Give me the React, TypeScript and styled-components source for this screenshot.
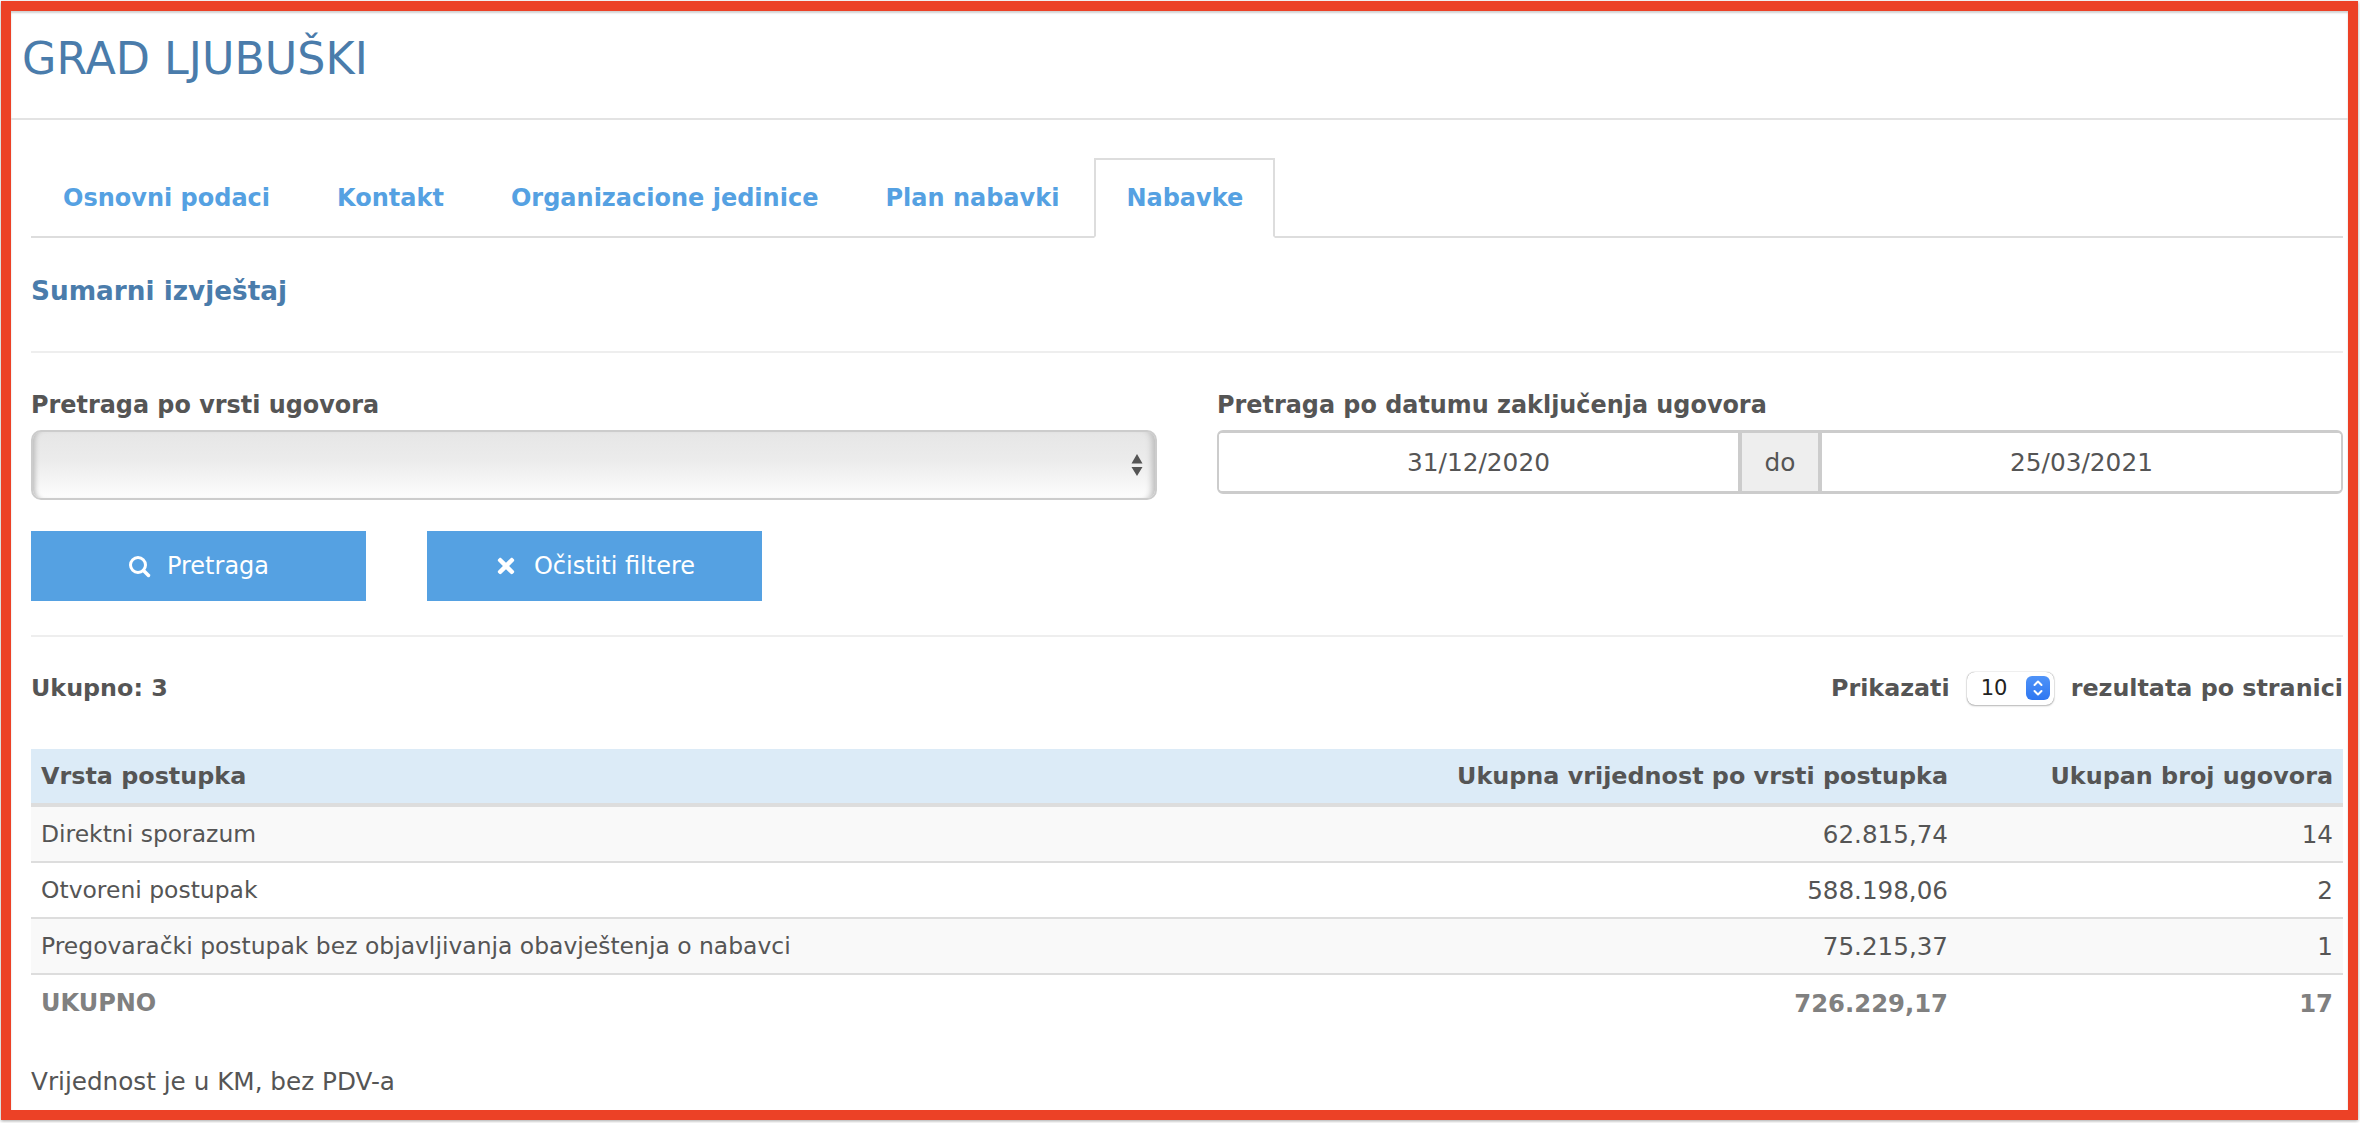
import React from "react";
import styled, { createGlobalStyle } from "styled-components";
import { FaTimes } from "react-icons/fa";

const Global = createGlobalStyle`
  html, body { margin: 0; padding: 0; background: #fff; }
  body { font-family: "DejaVu Sans", Verdana, sans-serif; color: #555; }
  * { box-sizing: border-box; }
`;

const Frame = styled.div`
  width: 2357px;
  height: 1119px;
  margin: 1px 2px 3px 1px;
  border: 10px solid #ec4126;
  box-shadow: 0 1px 3px rgba(0, 0, 0, 0.35), inset 0 2px 2px rgba(0, 0, 0, 0.18);
  background: #fff;
  overflow: hidden;
`;
const Header = styled.header`
  height: 109px;
  border-bottom: 2px solid #e3e3e3;
  padding: 20px 0 0 11px;
`;
const Title = styled.h1`
  margin: 0;
  font-size: 44.4px;
  line-height: 56px;
  font-weight: 400;
  color: #4a7cab;
`;
const Content = styled.main`
  padding: 38px 5px 0 20px;
`;
const Tabs = styled.nav`
  display: flex;
  height: 80px;
  border-bottom: 2px solid #ddd;
`;
const Tab = styled.a<{ $active?: boolean }>`
  height: 80px;
  padding: 0 30px;
  margin-right: 3px;
  display: flex;
  align-items: center;
  font-size: 24px;
  font-weight: 700;
  color: #55a1e2;
  background: ${(p) => (p.$active ? "#fff" : "transparent")};
  border: 2px solid ${(p) => (p.$active ? "#ddd" : "transparent")};
  border-bottom-color: ${(p) => (p.$active ? "#fff" : "transparent")};
`;
const Subtitle = styled.h2`
  margin: 37px 0 0;
  font-size: 26.3px;
  line-height: 32px;
  font-weight: 700;
  color: #4a7cab;
`;
const Rule = styled.hr<{ $top: number }>`
  margin: ${(p) => p.$top}px 0 0;
  border: 0;
  height: 2px;
  background: #eee;
`;
const Filters = styled.section`
  display: grid;
  grid-template-columns: 1126px 1126px;
  justify-content: space-between;
  margin-top: 37px;
`;
const Field = styled.div`
  display: flex;
  flex-direction: column;
`;
const Label = styled.label`
  font-size: 23.9px;
  line-height: 30px;
  height: 40px;
  font-weight: 700;
  color: #555;
`;
const FakeSelect = styled.div`
  height: 70px;
  border: 2px solid #ccc;
  border-radius: 10px;
  background: linear-gradient(#e6e6e6 0%, #ececec 45%, #fdfdfd 100%);
  box-shadow: inset 6px 0 5px -4px #bbb, inset -8px 0 6px -5px #bbb;
  display: flex;
  align-items: center;
  justify-content: flex-end;
  padding-right: 12px;
`;
const DateGroup = styled.div`
  display: grid;
  grid-template-columns: 1fr 84px 1fr;
  height: 64px;
  border: 2px solid #ccc;
  border-top-width: 3px;
  border-bottom-width: 3px;
  border-radius: 6px;
  overflow: hidden;
`;
const DateInput = styled.div`
  display: flex;
  align-items: center;
  justify-content: center;
  font-size: 24.8px;
  color: #555;
  background: #fff;
`;
const DateAddon = styled(DateInput)`
  background: #eee;
  border-left: 4px solid #ccc;
  border-right: 4px solid #ccc;
`;
const Actions = styled.div`
  display: flex;
  gap: 61px;
  margin-top: 31px;
`;
const Button = styled.button`
  width: 335px;
  height: 70px;
  border: 0;
  background: #55a1e2;
  color: #fff;
  font-family: inherit;
  font-size: 24px;
  display: flex;
  align-items: center;
  justify-content: center;
  gap: 16px;
`;
const Summary = styled.div`
  height: 112px;
  padding-bottom: 10px;
  display: flex;
  align-items: center;
  justify-content: space-between;
  font-size: 23.8px;
  font-weight: 700;
  color: #555;
`;
const PageSize = styled.div`
  display: flex;
  align-items: center;
  gap: 17px;
`;
const MiniSelect = styled.div`
  width: 87px;
  height: 33px;
  border-radius: 8px;
  background: #fff;
  box-shadow: 0 0 1px rgba(0, 0, 0, 0.5), 0 1px 2px rgba(0, 0, 0, 0.25);
  display: flex;
  align-items: center;
  justify-content: space-between;
  padding: 0 4px 0 14px;
  font-size: 21px;
  font-weight: 400;
  color: #222;
`;
const MiniArrows = styled.span`
  width: 24px;
  height: 24px;
  border-radius: 6px;
  background: linear-gradient(#4f93f8, #2f77f1);
  display: flex;
  align-items: center;
  justify-content: center;
`;
const Table = styled.table`
  width: 100%;
  border-collapse: separate;
  border-spacing: 0;
  font-size: 23.45px;
  color: #555;
`;
const HeadCell = styled.th<{ $right?: boolean; $w?: number }>`
  height: 58px;
  padding: 0 10px;
  background: #dcebf7;
  border-bottom: 4px solid #ddd;
  font-size: 23.85px;
  font-weight: 700;
  text-align: ${(p) => (p.$right ? "right" : "left")};
  width: ${(p) => (p.$w ? `${p.$w}px` : "auto")};
`;
const Cell = styled.td<{ $right?: boolean }>`
  height: 56px;
  padding: 0 10px;
  border-bottom: 2px solid #ddd;
  font-size: ${(p) => (p.$right ? "24.6px" : "inherit")};
  text-align: ${(p) => (p.$right ? "right" : "left")};
`;
const Row = styled.tr<{ $odd?: boolean }>`
  background: ${(p) => (p.$odd ? "#f9f9f9" : "#fff")};
`;
const TotalCell = styled.td<{ $right?: boolean }>`
  height: 56px;
  padding: 0 10px;
  font-size: ${(p) => (p.$right ? "24.3px" : "24px")};
  font-weight: 700;
  color: #808080;
  text-align: ${(p) => (p.$right ? "right" : "left")};
`;
const Note = styled.p`
  margin: 36px 0 0;
  font-size: 24.7px;
  line-height: 30px;
  color: #555;
`;

const rows = [
  ["Direktni sporazum", "62.815,74", "14"],
  ["Otvoreni postupak", "588.198,06", "2"],
  ["Pregovarački postupak bez objavljivanja obavještenja o nabavci", "75.215,37", "1"],
];

export default function App() {
  return (
    <>
      <Global />
      <Frame>
        <Header>
          <Title>GRAD LJUBUŠKI</Title>
        </Header>
        <Content>
          <Tabs>
            <Tab>Osnovni podaci</Tab>
            <Tab>Kontakt</Tab>
            <Tab>Organizacione jedinice</Tab>
            <Tab>Plan nabavki</Tab>
            <Tab $active>Nabavke</Tab>
          </Tabs>
          <Subtitle>Sumarni izvještaj</Subtitle>
          <Rule $top={44} />
          <Filters>
            <Field>
              <Label>Pretraga po vrsti ugovora</Label>
              <FakeSelect>
                <svg width="12" height="22" viewBox="0 0 12 22" fill="#555">
                  <path d="M6 0l5.500 9.500H.5zM6 22L.5 13h11z" />
                </svg>
              </FakeSelect>
            </Field>
            <Field>
              <Label>Pretraga po datumu zaključenja ugovora</Label>
              <DateGroup>
                <DateInput>31/12/2020</DateInput>
                <DateAddon>do</DateAddon>
                <DateInput>25/03/2021</DateInput>
              </DateGroup>
            </Field>
          </Filters>
          <Actions>
            <Button>
              <svg width="23" height="23" viewBox="0 0 23 23" fill="none" stroke="#fff">
                <circle cx="10" cy="10" r="7.500" strokeWidth="3" />
                <path d="M15.500 15.500L20.500 20.500" strokeWidth="3.500" strokeLinecap="round" />
              </svg>
              Pretraga
            </Button>
            <Button>
              <FaTimes size={24} />
              Očistiti filtere
            </Button>
          </Actions>
          <Rule $top={34} />
          <Summary>
            <span>Ukupno: 3</span>
            <PageSize>
              <span>Prikazati</span>
              <MiniSelect>
                10
                <MiniArrows>
                  <svg width="12" height="18" viewBox="0 0 12 18" fill="none" stroke="#fff" strokeWidth="2" strokeLinecap="round" strokeLinejoin="round">
                    <path d="M2.5 6L6 2.5 9.500 6M2.500 12L6 15.500 9.500 12" />
                  </svg>
                </MiniArrows>
              </MiniSelect>
              <span>rezultata po stranici</span>
            </PageSize>
          </Summary>
          <Table>
            <thead>
              <tr>
                <HeadCell>Vrsta postupka</HeadCell>
                <HeadCell $right $w={600}>Ukupna vrijednost po vrsti postupka</HeadCell>
                <HeadCell $right $w={385}>Ukupan broj ugovora</HeadCell>
              </tr>
            </thead>
            <tbody>
              {rows.map((r, i) => (
                <Row key={r[0]} $odd={i % 2 === 0}>
                  <Cell>{r[0]}</Cell>
                  <Cell $right>{r[1]}</Cell>
                  <Cell $right>{r[2]}</Cell>
                </Row>
              ))}
              <tr>
                <TotalCell>UKUPNO</TotalCell>
                <TotalCell $right>726.229,17</TotalCell>
                <TotalCell $right>17</TotalCell>
              </tr>
            </tbody>
          </Table>
          <Note>Vrijednost je u KM, bez PDV-a</Note>
        </Content>
      </Frame>
    </>
  );
}
